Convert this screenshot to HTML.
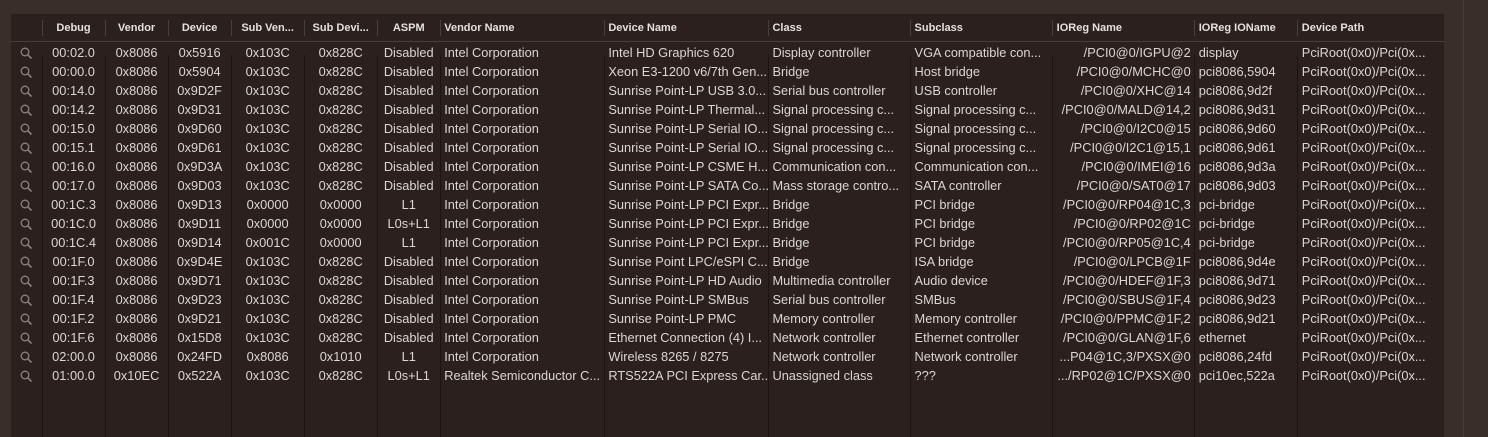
<!DOCTYPE html><html><head><style>
body{margin:0;width:1488px;height:437px;background:#3a2e2b;overflow:hidden;font-family:"Liberation Sans",Arial,sans-serif;position:relative}
#t{position:absolute;left:11px;top:14px;width:1433px;height:423px;background:#2b201e}
.vl{position:absolute;top:41px;bottom:0;width:1px;background:#1c1413}
.hl{position:absolute;top:6px;height:16px;width:1px;background:#4a3e3b}
.hb{position:absolute;left:0;right:0;top:27px;height:1px;background:#4a3e3b}
table{position:absolute;left:0;top:0;border-collapse:collapse;table-layout:fixed;width:1433px}
td,th{padding:0 4px;white-space:nowrap;overflow:hidden;color:#dcd6d3;font-size:12.8px;height:19px;line-height:19px}
th{height:29px;line-height:28px;font-size:11px;font-weight:bold;color:#e6e0dd;text-align:left;vertical-align:top}
.c{text-align:center}.r{text-align:right}
#sl{position:absolute;left:1463px;top:0;width:1px;height:437px;background:#4a3e3b}
svg{vertical-align:middle}
</style></head><body>
<div id="t">
<div class="hb"></div>
<table>
<colgroup><col style="width:31px"><col style="width:63px"><col style="width:63px"><col style="width:63px"><col style="width:73px"><col style="width:73px"><col style="width:63px"><col style="width:164px"><col style="width:164px"><col style="width:142px"><col style="width:142px"><col style="width:142px"><col style="width:103px"><col style="width:146px"></colgroup>
<tr><th></th><th class="c">Debug</th><th class="c">Vendor</th><th class="c">Device</th><th class="c">Sub Ven...</th><th class="c">Sub Devi...</th><th class="c">ASPM</th><th>Vendor Name</th><th>Device Name</th><th>Class</th><th>Subclass</th><th>IOReg Name</th><th>IOReg IOName</th><th>Device Path</th></tr>
<tbody id="b"></tbody>
</table>
</div>
<div id="sl"></div>
<script>
var L=[42,105,168,231,304,377,440,604,768,910,1052,1194,1297];
var t=document.getElementById('t');
L.forEach(function(x){var d=document.createElement('div');d.className='vl';d.style.left=(x-11)+'px';t.appendChild(d);var h=document.createElement('div');h.className='hl';h.style.left=(x-11)+'px';t.appendChild(h);});
var R=[
["00:02.0","0x8086","0x5916","0x103C","0x828C","Disabled","Intel Corporation","Intel HD Graphics 620","Display controller","VGA compatible con...","/PCI0@0/IGPU@2","display"],
["00:00.0","0x8086","0x5904","0x103C","0x828C","Disabled","Intel Corporation","Xeon E3-1200 v6/7th Gen...","Bridge","Host bridge","/PCI0@0/MCHC@0","pci8086,5904"],
["00:14.0","0x8086","0x9D2F","0x103C","0x828C","Disabled","Intel Corporation","Sunrise Point-LP USB 3.0...","Serial bus controller","USB controller","/PCI0@0/XHC@14","pci8086,9d2f"],
["00:14.2","0x8086","0x9D31","0x103C","0x828C","Disabled","Intel Corporation","Sunrise Point-LP Thermal...","Signal processing c...","Signal processing c...","/PCI0@0/MALD@14,2","pci8086,9d31"],
["00:15.0","0x8086","0x9D60","0x103C","0x828C","Disabled","Intel Corporation","Sunrise Point-LP Serial IO...","Signal processing c...","Signal processing c...","/PCI0@0/I2C0@15","pci8086,9d60"],
["00:15.1","0x8086","0x9D61","0x103C","0x828C","Disabled","Intel Corporation","Sunrise Point-LP Serial IO...","Signal processing c...","Signal processing c...","/PCI0@0/I2C1@15,1","pci8086,9d61"],
["00:16.0","0x8086","0x9D3A","0x103C","0x828C","Disabled","Intel Corporation","Sunrise Point-LP CSME H...","Communication con...","Communication con...","/PCI0@0/IMEI@16","pci8086,9d3a"],
["00:17.0","0x8086","0x9D03","0x103C","0x828C","Disabled","Intel Corporation","Sunrise Point-LP SATA Co...","Mass storage contro...","SATA controller","/PCI0@0/SAT0@17","pci8086,9d03"],
["00:1C.3","0x8086","0x9D13","0x0000","0x0000","L1","Intel Corporation","Sunrise Point-LP PCI Expr...","Bridge","PCI bridge","/PCI0@0/RP04@1C,3","pci-bridge"],
["00:1C.0","0x8086","0x9D11","0x0000","0x0000","L0s+L1","Intel Corporation","Sunrise Point-LP PCI Expr...","Bridge","PCI bridge","/PCI0@0/RP02@1C","pci-bridge"],
["00:1C.4","0x8086","0x9D14","0x001C","0x0000","L1","Intel Corporation","Sunrise Point-LP PCI Expr...","Bridge","PCI bridge","/PCI0@0/RP05@1C,4","pci-bridge"],
["00:1F.0","0x8086","0x9D4E","0x103C","0x828C","Disabled","Intel Corporation","Sunrise Point LPC/eSPI C...","Bridge","ISA bridge","/PCI0@0/LPCB@1F","pci8086,9d4e"],
["00:1F.3","0x8086","0x9D71","0x103C","0x828C","Disabled","Intel Corporation","Sunrise Point-LP HD Audio","Multimedia controller","Audio device","/PCI0@0/HDEF@1F,3","pci8086,9d71"],
["00:1F.4","0x8086","0x9D23","0x103C","0x828C","Disabled","Intel Corporation","Sunrise Point-LP SMBus","Serial bus controller","SMBus","/PCI0@0/SBUS@1F,4","pci8086,9d23"],
["00:1F.2","0x8086","0x9D21","0x103C","0x828C","Disabled","Intel Corporation","Sunrise Point-LP PMC","Memory controller","Memory controller","/PCI0@0/PPMC@1F,2","pci8086,9d21"],
["00:1F.6","0x8086","0x15D8","0x103C","0x828C","Disabled","Intel Corporation","Ethernet Connection (4) I...","Network controller","Ethernet controller","/PCI0@0/GLAN@1F,6","ethernet"],
["02:00.0","0x8086","0x24FD","0x8086","0x1010","L1","Intel Corporation","Wireless 8265 / 8275","Network controller","Network controller","...P04@1C,3/PXSX@0","pci8086,24fd"],
["01:00.0","0x10EC","0x522A","0x103C","0x828C","L0s+L1","Realtek Semiconductor C...","RTS522A PCI Express Car...","Unassigned class","???",".../RP02@1C/PXSX@0","pci10ec,522a"]];
var ic='<svg width="13" height="13" viewBox="0 0 13 13"><circle cx="5" cy="5" r="3.8" fill="none" stroke="#8a807c" stroke-width="1.3"/><path d="M7.8 7.8L11.5 11.5" stroke="#8a807c" stroke-width="1.6"/></svg>';
var h='';R.forEach(function(r){h+='<tr><td class="c">'+ic+'</td>';for(var i=0;i<12;i++){var c=i<6?'c':(i==10?'r':'');h+='<td class="'+c+'">'+r[i]+'</td>';}h+='<td>PciRoot(0x0)/Pci(0x...</td></tr>';});
document.getElementById('b').innerHTML=h;
</script>
</body></html>
